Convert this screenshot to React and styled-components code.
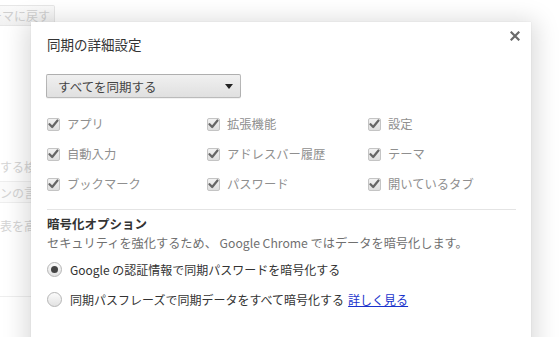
import React from "react";
import styled, { createGlobalStyle } from "styled-components";

const Global = createGlobalStyle`
  html, body { margin: 0; padding: 0; background: #fff; }
  body { font-family: "Noto Sans CJK JP", "Noto Sans", sans-serif; width: 559px; height: 337px; overflow: hidden; }
  * { box-sizing: border-box; }
`;

const Page = styled.div`
  position: relative;
  width: 559px;
  height: 337px;
  overflow: hidden;
  background: #fff;
`;

const BackPage = styled.div`
  display: flex;
  flex-direction: column;
  padding-top: 5px;
  color: #d4d4d4;
  font-size: 12px;
`;

const BackButton = styled.div`
  width: 55px;
  height: 21px;
  border: 1px solid #e6e6e6;
  border-left: none;
  border-radius: 0 2px 2px 0;
  background: linear-gradient(#fafafa, #f1f1f1);
  line-height: 19px;
  padding-right: 4px;
  white-space: nowrap;
  direction: rtl;
  overflow: hidden;
  color: #cfcfcf;
`;

const BackLine = styled.div`
  margin-top: ${(p) => p.$mt}px;
  height: ${(p) => p.$h || 20}px;
  line-height: ${(p) => p.$h || 20}px;
  white-space: nowrap;
  width: 120px;
  padding-left: ${(p) => p.$indent || 0}px;
  ${(p) => p.$boxed && `border-top: 1px solid #eee; border-bottom: 1px solid #eee; background: #fbfbfb;`}
`;

const BackRule = styled.div`
  margin-top: ${(p) => p.$mt}px;
  width: 31px;
  height: 1px;
  background: #eee;
`;

const Dialog = styled.div`
  position: absolute;
  left: 31px;
  top: 22px;
  width: 500px;
  height: 340px;
  background: #fff;
  box-shadow: 0 4px 23px 5px rgba(0, 0, 0, 0.15), 0 0 1px rgba(0,0,0,0.12);
  padding: 12px 15px 0 16px;
  display: flex;
  flex-direction: column;
`;

const Title = styled.h1`
  margin: 0;
  font-size: 13.5px;
  font-weight: normal;
  color: #333;
  line-height: 20px;
`;

const Close = styled.button`
  position: absolute;
  right: 9px;
  top: 7px;
  width: 14px;
  height: 14px;
  padding: 0;
  border: none;
  background: none;
  display: flex;
  align-items: center;
  justify-content: center;
`;

const Select = styled.div`
  margin-top: 20px;
  margin-left: -1px;
  width: 195px;
  height: 24px;
  border: 1px solid rgba(0, 0, 0, 0.22);
  border-radius: 2px;
  background: linear-gradient(#f0f0f0, #e0e0e0);
  box-shadow: 0 1px 0 rgba(0,0,0,0.05);
  display: flex;
  align-items: center;
  justify-content: space-between;
  padding: 0 7px 0 11px;
  font-size: 12.5px;
  color: #444;
`;

const Arrow = styled.span`
  width: 0;
  height: 0;
  border-left: 4px solid transparent;
  border-right: 4px solid transparent;
  border-top: 5px solid #222;
`;

const Grid = styled.div`
  margin-top: 11px;
  display: grid;
  grid-template-columns: 160px 161px 160px;
  grid-auto-rows: 30px;
`;

const CheckItem = styled.label`
  display: flex;
  align-items: center;
  gap: 7px;
  font-size: 12.3px;
  color: #8f8f8f;
  height: 30px;
`;

const Box = styled.span`
  width: 13px;
  height: 13px;
  border: 1px solid #c4c4c4;
  border-radius: 2px;
  background: linear-gradient(#f2f2f2, #dedede);
  display: flex;
  align-items: center;
  justify-content: center;
  flex: none;
`;

const Rule = styled.div`
  margin-top: 10px;
  height: 1px;
  background: #e4e4e4;
`;

const Heading = styled.h2`
  margin: 4px 0 0;
  font-size: 12.5px;
  font-weight: bold;
  color: #333;
  line-height: 20px;
`;

const Desc = styled.div`
  font-size: 12.2px;
  color: #707070;
  line-height: 18px;
`;

const RadioRow = styled.label`
  margin-top: ${(p) => p.$mt}px;
  display: flex;
  align-items: center;
  gap: 8px;
  font-size: 12px;
  color: #333;
  height: 24px;
`;

const RadioCircle = styled.span`
  width: 15px;
  height: 15px;
  border-radius: 50%;
  border: 1px solid #b5b5b5;
  background: linear-gradient(#fbfbfb, #e2e2e2);
  display: flex;
  align-items: center;
  justify-content: center;
  flex: none;
  &::after {
    content: "";
    display: ${(p) => (p.$on ? "block" : "none")};
    width: 7px;
    height: 7px;
    border-radius: 50%;
    background: #444;
  }
`;

const Link = styled.a`
  color: #1a33cc;
  text-decoration: underline;
  margin-left: 4px;
`;

const Check = () => (
  <svg width="11" height="10" viewBox="0 0 11 10">
    <path d="M1.5 5.2 L4.2 8 L9.5 1.5" stroke="#666" strokeWidth="2.2" fill="none" strokeLinecap="round" strokeLinejoin="round" />
  </svg>
);

const items = [
  "アプリ", "拡張機能", "設定",
  "自動入力", "アドレスバー履歴", "テーマ",
  "ブックマーク", "パスワード", "開いているタブ",
];

export default function App() {
  return (
    <Page>
      <Global />
      <BackPage>
        <BackButton>デフォルトのテーマに戻す</BackButton>
        <BackLine $mt={131}>する検索</BackLine>
        <BackLine $mt={4} $boxed $h={22} $indent={0}>ンの言語</BackLine>
        <BackLine $mt={13}>表を高</BackLine>
        <BackRule $mt={60} />
      </BackPage>
      <Dialog>
        <Title>同期の詳細設定</Title>
        <Close aria-label="閉じる">
          <svg width="10" height="10" viewBox="0 0 10 10">
            <path d="M1.5 1.5 L8.5 8.5 M8.5 1.5 L1.5 8.5" stroke="#6a6a6a" strokeWidth="2.2" strokeLinecap="square" />
          </svg>
        </Close>
        <Select>
          <span>すべてを同期する</span>
          <Arrow />
        </Select>
        <Grid>
          {items.map((t) => (
            <CheckItem key={t}>
              <Box><Check /></Box>
              {t}
            </CheckItem>
          ))}
        </Grid>
        <Rule />
        <Heading>暗号化オプション</Heading>
        <Desc>セキュリティを強化するため、 Google Chrome ではデータを暗号化します。</Desc>
        <RadioRow $mt={5}>
          <RadioCircle $on />
          Google の認証情報で同期パスワードを暗号化する
        </RadioRow>
        <RadioRow $mt={6}>
          <RadioCircle />
          <span>同期パスフレーズで同期データをすべて暗号化する<Link href="#">詳しく見る</Link></span>
        </RadioRow>
      </Dialog>
    </Page>
  );
}
